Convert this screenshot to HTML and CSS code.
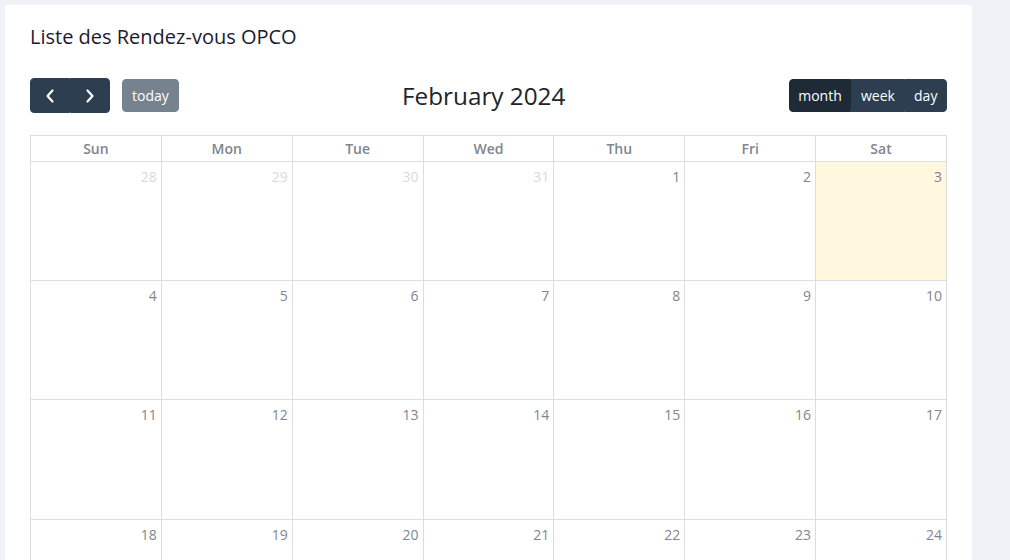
FILE: index.html
```html
<!DOCTYPE html>
<html>
<head>
<meta charset="utf-8">
<link rel="stylesheet" href="styles.css">
</head>
<body>
<div class="card">
  <h1 class="page-title">Liste des Rendez-vous OPCO</h1>
  <div class="toolbar">
    <div class="tb-left">
      <div class="btn-group">
        <button class="btn btn-icon" aria-label="prev"><svg width="10" height="16" viewBox="0 0 10 16"><path d="M7.5 2.5 L2.5 8 L7.5 13.5" fill="none" stroke="#fff" stroke-width="2.2" stroke-linecap="round" stroke-linejoin="round"/></svg></button>
        <button class="btn btn-icon" aria-label="next"><svg width="10" height="16" viewBox="0 0 10 16"><path d="M2.5 2.5 L7.5 8 L2.5 13.5" fill="none" stroke="#fff" stroke-width="2.2" stroke-linecap="round" stroke-linejoin="round"/></svg></button>
      </div>
      <button class="btn btn-today">today</button>
    </div>
    <h2 class="cal-title">February 2024</h2>
    <div class="btn-group">
      <button class="btn btn-active">month</button>
      <button class="btn">week</button>
      <button class="btn">day</button>
    </div>
  </div>
  <table class="cal">
    <thead>
      <tr><th>Sun</th><th>Mon</th><th>Tue</th><th>Wed</th><th>Thu</th><th>Fri</th><th>Sat</th></tr>
    </thead>
    <tbody>
      <tr>
        <td class="other"><span class="num">28</span></td>
        <td class="other"><span class="num">29</span></td>
        <td class="other"><span class="num">30</span></td>
        <td class="other"><span class="num">31</span></td>
        <td><span class="num">1</span></td>
        <td><span class="num">2</span></td>
        <td class="today"><span class="num">3</span></td>
      </tr>
      <tr>
        <td><span class="num">4</span></td><td><span class="num">5</span></td><td><span class="num">6</span></td><td><span class="num">7</span></td><td><span class="num">8</span></td><td><span class="num">9</span></td><td><span class="num">10</span></td>
      </tr>
      <tr class="tall">
        <td><span class="num">11</span></td><td><span class="num">12</span></td><td><span class="num">13</span></td><td><span class="num">14</span></td><td><span class="num">15</span></td><td><span class="num">16</span></td><td><span class="num">17</span></td>
      </tr>
      <tr>
        <td><span class="num">18</span></td><td><span class="num">19</span></td><td><span class="num">20</span></td><td><span class="num">21</span></td><td><span class="num">22</span></td><td><span class="num">23</span></td><td><span class="num">24</span></td>
      </tr>
    </tbody>
  </table>
</div>
</body>
</html>
```

FILE: styles.css
```css
html, body {
  margin: 0;
  padding: 0;
}
body {
  background: #eff3f8;
  font-family: "Open Sans", "Liberation Sans", sans-serif;
  font-size: 14px;
  color: #212529;
  overflow: hidden;
}
.card {
  background: #fff;
  margin: 5px 0 0 5px;
  width: 967px;
  box-sizing: border-box;
  padding: 20px 25px 0 25px;
  min-height: 600px;
}
.page-title {
  margin: 0;
  font-size: 20px;
  font-weight: 400;
  line-height: 24px;
  color: #1a1a2e;
}
.toolbar {
  display: flex;
  justify-content: space-between;
  align-items: center;
  margin-top: 29px;
  margin-bottom: 22px;
}
.tb-left {
  display: flex;
  align-items: center;
  gap: 12px;
}
.btn-group {
  display: flex;
}
.btn {
  font-family: "Open Sans", "Liberation Sans", sans-serif;
  font-size: 14px;
  line-height: 21px;
  color: #fff;
  background: #2c3e50;
  border: 1px solid #2c3e50;
  padding: 5px 8.6px;
  border-radius: 0;
  cursor: pointer;
}
.btn-group .btn:first-child {
  border-top-left-radius: 4px;
  border-bottom-left-radius: 4px;
}
.btn-group .btn:last-child {
  border-top-right-radius: 4px;
  border-bottom-right-radius: 4px;
}
.btn-active {
  background: #1e2b37;
  border-color: #1e2b37;
}
.btn-icon {
  width: 40px;
  height: 35px;
  padding: 0;
  display: flex;
  align-items: center;
  justify-content: center;
}
.btn-today {
  background: #76828d;
  border-color: #76828d;
  border-radius: 4px;
  padding: 5px 9px;
}
.cal-title {
  margin: 0;
  font-size: 24.3px;
  font-weight: 400;
  line-height: 32px;
  color: #212529;
}
.cal {
  width: 917px;
  border-collapse: collapse;
  table-layout: fixed;
}
.cal th, .cal td {
  border: 1px solid #ddd;
  padding: 0;
}
.cal th {
  height: 25px;
  font-size: 14px;
  font-weight: 600;
  color: #80868e;
  text-align: center;
  vertical-align: middle;
  line-height: 20px;
}
.cal td {
  height: 118px;
  vertical-align: top;
  text-align: right;
}
.cal .tall td {
  height: 119px;
}
.num {
  display: inline-block;
  padding: 4px 4px;
  line-height: 21px;
  color: #80868e;
}
.other .num {
  opacity: 0.3;
}
.today {
  background: #fff8df;
}
```
